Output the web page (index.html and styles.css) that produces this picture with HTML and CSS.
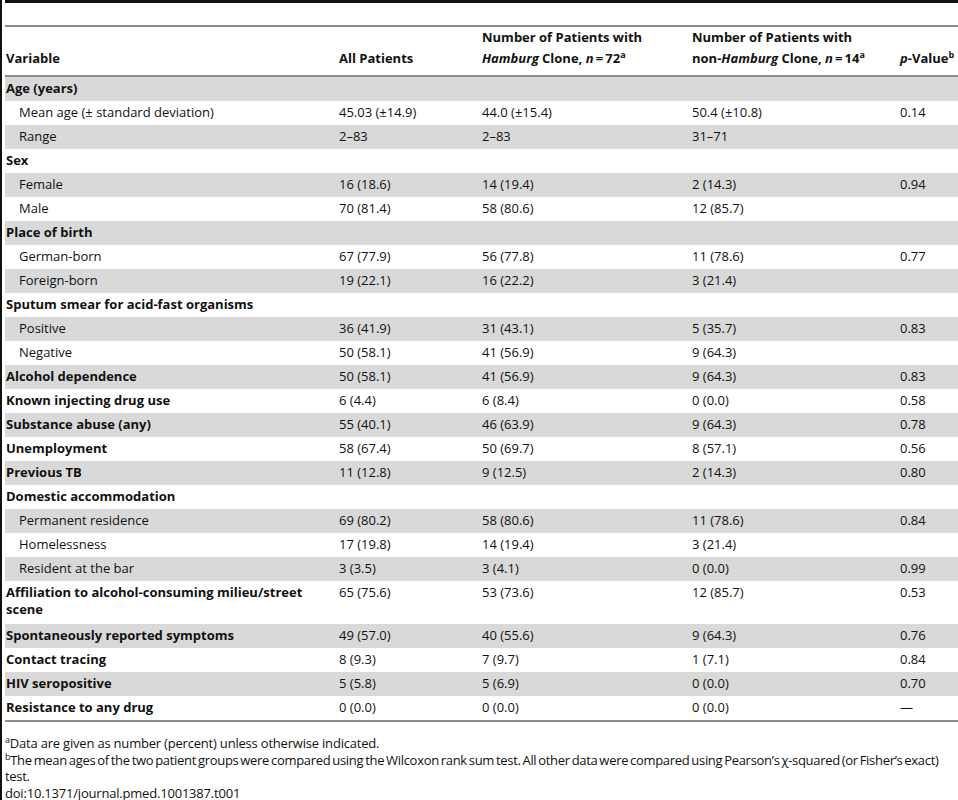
FILE: index.html
```html
<!DOCTYPE html>
<html lang="en">
<head>
    <meta charset="UTF-8">
    <meta name="viewport" content="width=device-width, initial-scale=1.0">
    <title>Table 1 - Patient characteristics</title>
    <link rel="stylesheet" href="styles.css">
</head>
<body>
    <div class="frame">
        <div class="table-wrap">
            <div class="caption-space"></div>
            <table class="data-table">
                <colgroup>
                    <col class="c-var">
                    <col class="c-all">
                    <col class="c-ham">
                    <col class="c-non">
                    <col class="c-p">
                </colgroup>
                <thead>
                    <tr>
                        <th>Variable</th>
                        <th>All Patients</th>
                        <th>Number of Patients with <i>Hamburg</i> Clone, <i>n</i>&thinsp;=&thinsp;72<sup>a</sup></th>
                        <th>Number of Patients with <span class="nowrap">non-<i>Hamburg</i></span> Clone, <i>n</i>&thinsp;=&thinsp;14<sup>a</sup></th>
                        <th><i>p</i>-Value<sup>b</sup></th>
                    </tr>
                </thead>
                <tbody>
                    <tr class="group"><td>Age (years)</td><td></td><td></td><td></td><td></td></tr>
                    <tr><td class="sub">Mean age (&plusmn; standard deviation)</td><td>45.03 (&plusmn;14.9)</td><td>44.0 (&plusmn;15.4)</td><td>50.4 (&plusmn;10.8)</td><td>0.14</td></tr>
                    <tr><td class="sub">Range</td><td>2&ndash;83</td><td>2&ndash;83</td><td>31&ndash;71</td><td></td></tr>
                    <tr class="group"><td>Sex</td><td></td><td></td><td></td><td></td></tr>
                    <tr><td class="sub">Female</td><td>16 (18.6)</td><td>14 (19.4)</td><td>2 (14.3)</td><td>0.94</td></tr>
                    <tr><td class="sub">Male</td><td>70 (81.4)</td><td>58 (80.6)</td><td>12 (85.7)</td><td></td></tr>
                    <tr class="group"><td>Place of birth</td><td></td><td></td><td></td><td></td></tr>
                    <tr><td class="sub">German-born</td><td>67 (77.9)</td><td>56 (77.8)</td><td>11 (78.6)</td><td>0.77</td></tr>
                    <tr><td class="sub">Foreign-born</td><td>19 (22.1)</td><td>16 (22.2)</td><td>3 (21.4)</td><td></td></tr>
                    <tr class="group"><td>Sputum smear for acid-fast organisms</td><td></td><td></td><td></td><td></td></tr>
                    <tr><td class="sub">Positive</td><td>36 (41.9)</td><td>31 (43.1)</td><td>5 (35.7)</td><td>0.83</td></tr>
                    <tr><td class="sub">Negative</td><td>50 (58.1)</td><td>41 (56.9)</td><td>9 (64.3)</td><td></td></tr>
                    <tr class="group"><td>Alcohol dependence</td><td>50 (58.1)</td><td>41 (56.9)</td><td>9 (64.3)</td><td>0.83</td></tr>
                    <tr class="group"><td>Known injecting drug use</td><td>6 (4.4)</td><td>6 (8.4)</td><td>0 (0.0)</td><td>0.58</td></tr>
                    <tr class="group"><td>Substance abuse (any)</td><td>55 (40.1)</td><td>46 (63.9)</td><td>9 (64.3)</td><td>0.78</td></tr>
                    <tr class="group"><td>Unemployment</td><td>58 (67.4)</td><td>50 (69.7)</td><td>8 (57.1)</td><td>0.56</td></tr>
                    <tr class="group"><td>Previous TB</td><td>11 (12.8)</td><td>9 (12.5)</td><td>2 (14.3)</td><td>0.80</td></tr>
                    <tr class="group"><td>Domestic accommodation</td><td></td><td></td><td></td><td></td></tr>
                    <tr><td class="sub">Permanent residence</td><td>69 (80.2)</td><td>58 (80.6)</td><td>11 (78.6)</td><td>0.84</td></tr>
                    <tr><td class="sub">Homelessness</td><td>17 (19.8)</td><td>14 (19.4)</td><td>3 (21.4)</td><td></td></tr>
                    <tr><td class="sub">Resident at the bar</td><td>3 (3.5)</td><td>3 (4.1)</td><td>0 (0.0)</td><td>0.99</td></tr>
                    <tr class="group tall"><td>Affiliation to alcohol-consuming milieu/street scene</td><td>65 (75.6)</td><td>53 (73.6)</td><td>12 (85.7)</td><td>0.53</td></tr>
                    <tr class="group"><td>Spontaneously reported symptoms</td><td>49 (57.0)</td><td>40 (55.6)</td><td>9 (64.3)</td><td>0.76</td></tr>
                    <tr class="group"><td>Contact tracing</td><td>8 (9.3)</td><td>7 (9.7)</td><td>1 (7.1)</td><td>0.84</td></tr>
                    <tr class="group"><td>HIV seropositive</td><td>5 (5.8)</td><td>5 (6.9)</td><td>0 (0.0)</td><td>0.70</td></tr>
                    <tr class="group"><td>Resistance to any drug</td><td>0 (0.0)</td><td>0 (0.0)</td><td>0 (0.0)</td><td>&mdash;</td></tr>
                </tbody>
            </table>
        </div>

        <div class="footnotes">
            <p><sup>a</sup>Data are given as number (percent) unless otherwise indicated.</p>
            <p class="long-note"><sup>b</sup>The mean ages of the two patient groups were compared using the Wilcoxon rank sum test. All other data were compared using Pearson&rsquo;s &chi;-squared (or Fisher&rsquo;s exact) test.</p>
            <p>doi:10.1371/journal.pmed.1001387.t001</p>
        </div>
    </div>
</body>
</html>
```

FILE: styles.css
```css
body {
    margin: 0;
    font-family: "Open Sans", "DejaVu Sans", sans-serif;
    font-size: 13px;
    color: #111;
    background: #fff;
}

.frame {
    border-left: 2px solid #111;
    padding-left: 3px;
    min-height: 800px;
    box-sizing: border-box;
}

.table-wrap {
    border-top: 3px solid #111;
}

.caption-space {
    height: 22px;
}

.data-table {
    width: 100%;
    table-layout: fixed;
    border-collapse: collapse;
    border-top: 2px solid #8c8c8c;
    border-bottom: 2px solid #8c8c8c;
}

.c-var { width: 333px; }
.c-all { width: 143px; }
.c-ham { width: 210px; }
.c-non { width: 208px; }

th {
    text-align: left;
    vertical-align: bottom;
    font-weight: bold;
    line-height: 21px;
    padding: 0 1px 6px 1px;
    border-bottom: 2px solid #8c8c8c;
}

.nowrap {
    white-space: nowrap;
}

th sup,
.footnotes sup {
    font-size: 9px;
    line-height: 0;
}

td {
    padding: 3px 1px 4px 1px;
    line-height: 17px;
    vertical-align: top;
}

tr.tall td {
    padding-bottom: 6px;
}

tbody tr:nth-child(odd) {
    background-color: #d9d9d9;
}

tr.group td:first-child {
    font-weight: bold;
}

td.sub {
    padding-left: 14px;
}

.footnotes {
    padding-top: 13px;
    line-height: 16.5px;
}

.footnotes p {
    margin: 0;
    letter-spacing: -0.2px;
}

.footnotes .long-note {
    letter-spacing: -0.3px;
    word-spacing: -1.2px;
}
```
